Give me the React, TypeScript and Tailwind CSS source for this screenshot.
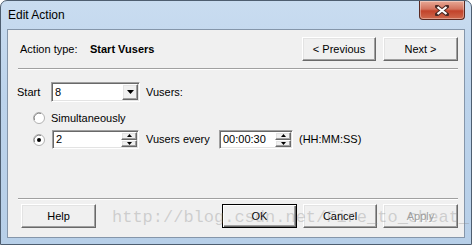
import React from 'react';

const ui = "font-['Liberation_Sans',Arial,sans-serif]";

const raised =
  'border border-t-white border-l-white border-r-[#696969] border-b-[#696969] shadow-[inset_-1px_-1px_0_#a0a0a0,inset_1px_1px_0_#e3e3e3]';
const sunken =
  'border border-t-[#a0a0a0] border-l-[#a0a0a0] border-r-white border-b-white shadow-[inset_1px_1px_0_#696969,inset_-1px_-1px_0_#e3e3e3]';

function Btn({ label, className, primary, disabled }: { label: string; className: string; primary?: boolean; disabled?: boolean }) {
  const edge = primary
    ? 'border border-black shadow-[inset_1px_1px_0_#fff,inset_-1px_-1px_0_#696969,inset_-2px_-2px_0_#a0a0a0]'
    : raised;
  const txt = disabled ? 'text-[#a0a0a0] [text-shadow:1px_1px_0_#fff]' : 'text-black';
  return (
    <div className={`flex h-[24px] items-center justify-center bg-[#f0f0f0] text-[11px] ${edge} ${txt} ${className}`}>
      {label}
    </div>
  );
}

function Arrow({ dir }: { dir: 'up' | 'down' }) {
  return (
    <svg width="5" height="3" viewBox="0 0 5 3">
      <path d={dir === 'up' ? 'M2.5 0 L5 3 L0 3 Z' : 'M0 0 L5 0 L2.5 3 Z'} fill="#000" />
    </svg>
  );
}

function Spin({ value, className }: { value: string; className: string }) {
  return (
    <div className={`flex h-[19px] items-stretch bg-white ${sunken} ${className}`}>
      <div className="flex flex-1 items-center pl-[3px] text-[11px]">{value}</div>
      <div className="my-[1px] mr-[1px] flex w-[16px] flex-col">
        <div className={`flex flex-1 items-center justify-center bg-[#f0f0f0] ${raised}`}>
          <Arrow dir="up" />
        </div>
        <div className={`flex flex-1 items-center justify-center bg-[#f0f0f0] ${raised}`}>
          <Arrow dir="down" />
        </div>
      </div>
    </div>
  );
}

function Radio({ checked }: { checked?: boolean }) {
  return (
    <svg width="12" height="12" viewBox="0 0 12 12">
      <circle cx="6" cy="6" r="5.5" fill="#fff" stroke="#b0b0b0" />
      <path d="M1.5 8 A5 5 0 0 1 8 1.5" fill="none" stroke="#8a8a8a" />
      {checked && <circle cx="6" cy="6" r="2" fill="#000" />}
    </svg>
  );
}

function Sep() {
  return <div className="ml-[10px] mr-[6px] h-[2px] border-t border-t-[#a0a0a0] border-b border-b-white" />;
}

export default function App() {
  return (
    <div className={`relative flex h-[245px] w-[472px] flex-col overflow-hidden rounded-t-[7px] border border-[#4e5e70] bg-[linear-gradient(180deg,#c9dcf0_0%,#bcd3eb_40%,#b7cfe8_100%)] ${ui}`}>
      {/* title bar */}
      <div className="flex h-[28px] shrink-0 items-start justify-between">
        <div className="pl-[7px] pt-[7px] text-[12px] leading-[15px] text-black">Edit Action</div>
        <div className="mr-[6px] flex h-[19px] w-[46px] items-center justify-center rounded-b-[4px] border border-t-0 border-[#5a2a22] bg-[linear-gradient(180deg,#e8a996_0%,#d3725d_45%,#c2432b_55%,#cf6a4e_100%)] shadow-[inset_0_0_0_1px_rgba(255,255,255,0.35)]">
          <svg width="14" height="11" viewBox="0 0 14 11">
            <path d="M2 1.5 L12 9.5 M12 1.5 L2 9.5" stroke="#4b2a25" strokeWidth="4" strokeLinecap="square" />
            <path d="M2.5 2 L11.5 9 M11.5 2 L2.5 9" stroke="#fff" strokeWidth="2.2" />
          </svg>
        </div>
      </div>

      {/* client area */}
      <div className="mx-[6px] flex h-[209px] shrink-0 flex-col border border-[#8596aa] bg-[#f0f0f0] text-[11px] text-black">
        <div className="mt-[7px] flex h-[24px] items-center pl-[12px] pr-[6px]">
          <span className="w-[70px]">Action type:</span>
          <span className="font-bold">Start Vusers</span>
          <div className="ml-auto flex gap-[7px]">
            <Btn label="<  Previous" className="w-[74px]" />
            <Btn label="Next  >" className="w-[75px]" />
          </div>
        </div>

        <div className="mt-[7px]">
          <Sep />
        </div>

        <div className="mt-[12px] flex h-[20px] items-center pl-[9px]">
          <span className="w-[34px]">Start</span>
          <div className={`flex h-[20px] w-[89px] items-stretch bg-white ${sunken}`}>
            <div className="flex flex-1 items-center pl-[3px]">8</div>
            <div className={`my-[1px] mr-[1px] flex w-[16px] items-center justify-center bg-[#f0f0f0] ${raised}`}>
              <svg width="7" height="4" viewBox="0 0 7 4">
                <path d="M0 0 L7 0 L3.5 4 Z" fill="#000" />
              </svg>
            </div>
          </div>
          <span className="ml-[6px]">Vusers:</span>
        </div>

        <div className="mt-[9px] flex h-[14px] items-center pl-[25px]">
          <span className="flex w-[18px]">
            <Radio />
          </span>
          <span>Simultaneously</span>
        </div>

        <div className="mt-[5px] flex h-[19px] items-center pl-[25px]">
          <span className="flex w-[19px]">
            <Radio checked />
          </span>
          <Spin value="2" className="w-[87px]" />
          <span className="ml-[7px] w-[73px]">Vusers every</span>
          <Spin value="00:00:30" className="w-[74px]" />
          <span className="ml-[6px]">(HH:MM:SS)</span>
        </div>

        <div className="flex-1" />
        <Sep />

        <div className="mb-[9px] mt-[4px] flex h-[24px] items-center pl-[13px] pr-[6px]">
          <Btn label="Help" className="w-[75px]" />
          <div className="ml-auto flex gap-[6px]">
            <Btn label="OK" className="w-[75px]" primary />
            <Btn label="Cancel" className="w-[74px]" />
            <Btn label="Apply" className="w-[75px]" disabled />
          </div>
        </div>
      </div>

      {/* watermark over the dialog */}
      <div className="pointer-events-none absolute left-[111px] top-[207px] font-['Liberation_Mono',monospace] text-[17px] leading-[20px] text-[rgba(140,140,140,0.35)]">
        http://blog.csdn.net/Fire_to_cheat_
      </div>
    </div>
  );
}
